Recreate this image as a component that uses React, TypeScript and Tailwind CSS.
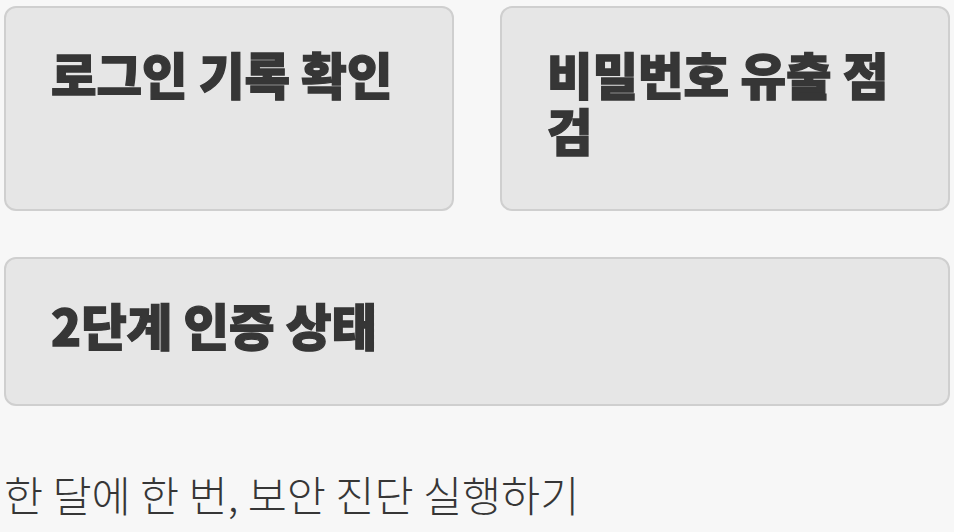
const cards = [
  { title: "로그인 기록 확인", wide: false },
  { title: "비밀번호 유출 점검", wide: false },
  { title: "2단계 인증 상태", wide: true },
];

function Card({ title, wide }: { title: string; wide: boolean }) {
  return (
    <div
      className={`rounded-xl border-2 border-[#cfcfcf] bg-[#e6e6e6] pl-[45px] pr-[45px] pt-[38px] pb-[51px] ${
        wide ? "col-span-2" : ""
      }`}
    >
      <h2 className="text-[49.5px] font-black leading-[56px] text-[#363636] [-webkit-text-stroke:1.3px_#363636]">
        {title}
      </h2>
    </div>
  );
}

export default function App() {
  return (
    <div
      className="min-h-screen bg-[#f7f7f7] px-[4px] pt-[6px]"
      style={{ fontFamily: '"Noto Sans CJK KR", "Noto Sans", sans-serif' }}
    >
      <div className="grid grid-cols-2 gap-x-[46px] gap-y-[46px]">
        {cards.map((c) => (
          <Card key={c.title} title={c.title} wide={c.wide} />
        ))}
      </div>
      <p className="mt-[60px] text-[42.5px] font-light leading-[56px] text-[#363636]">
        한 달에 한 번, 보안 진단 실행하기
      </p>
    </div>
  );
}
